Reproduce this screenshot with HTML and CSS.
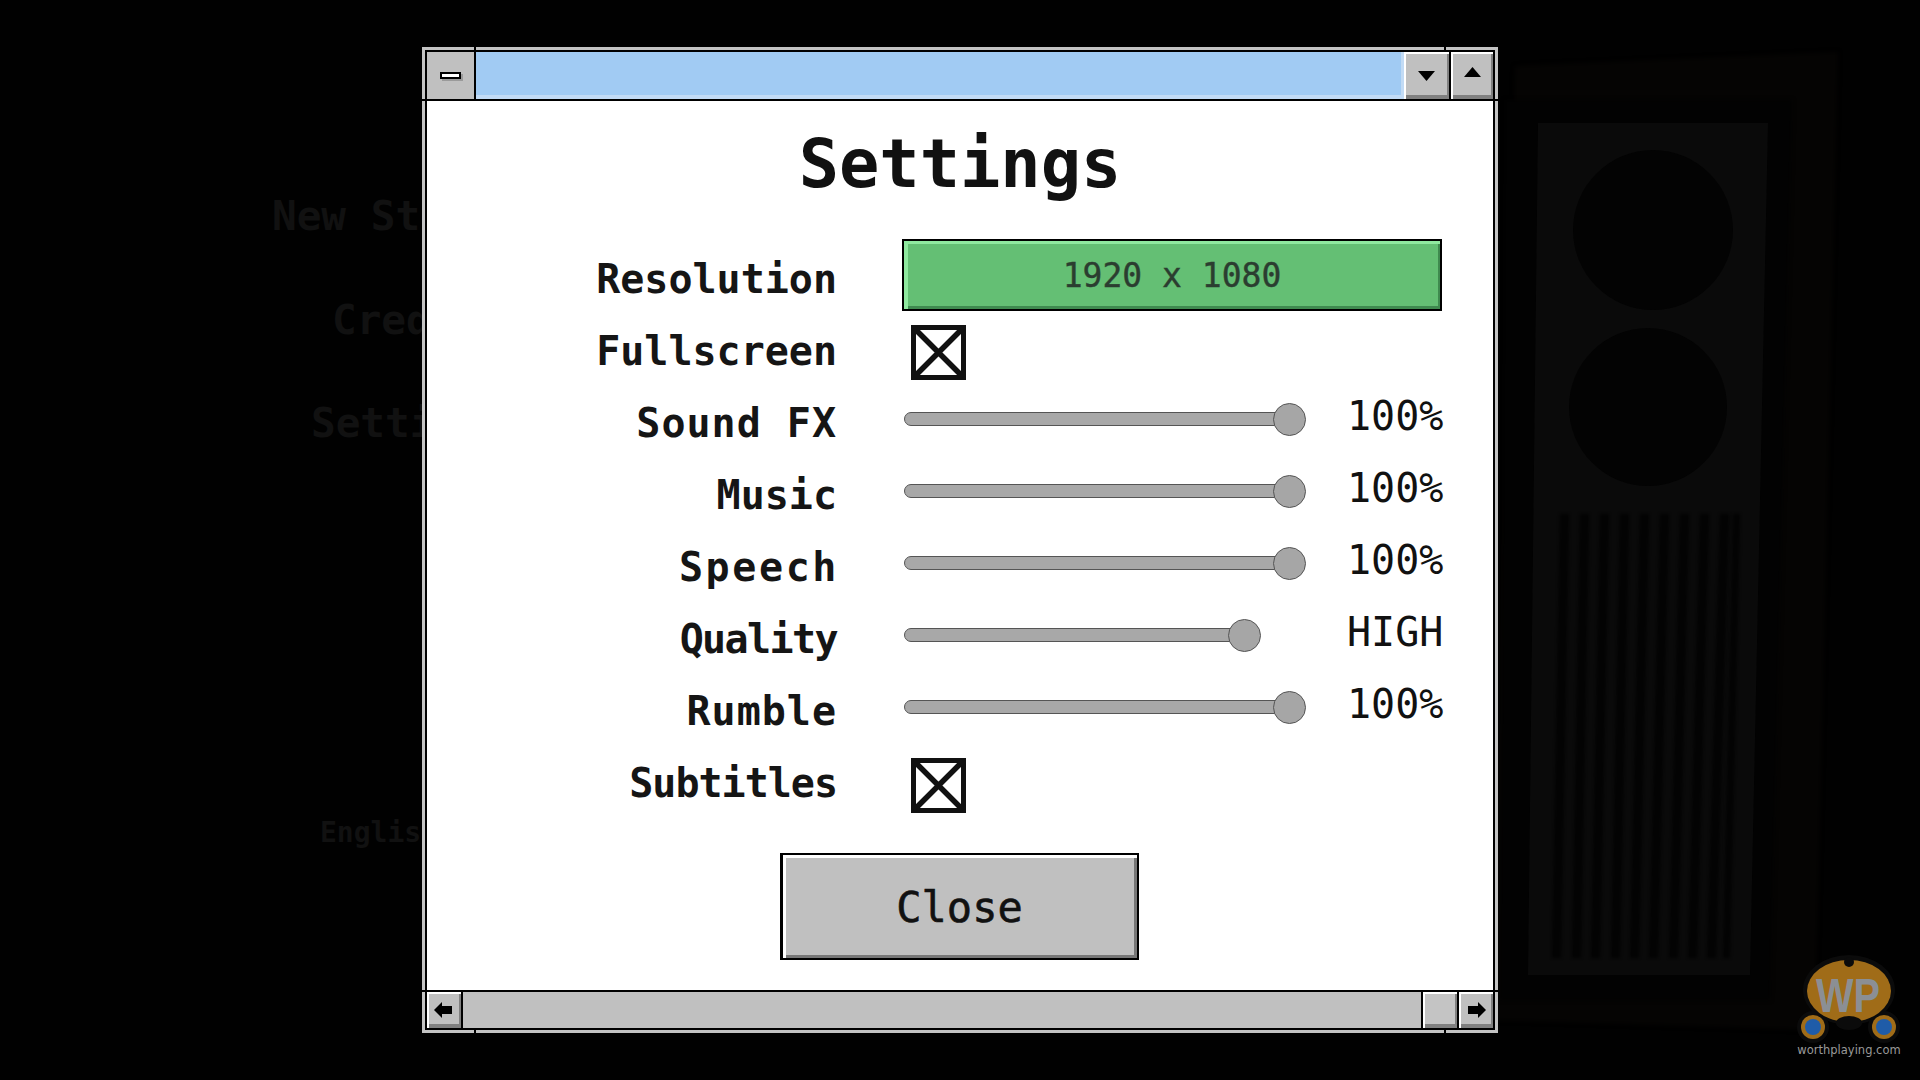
FILE: index.html
```html
<!DOCTYPE html>
<html lang="en">
<head>
    <meta charset="UTF-8">
    <meta name="viewport" content="width=device-width, initial-scale=1.0">
    <title>Settings</title>
    <link rel="stylesheet" href="styles.css">
</head>
<body>

    <!-- dimmed game scene behind the dialog -->
    <svg class="scene" viewBox="0 0 1920 1080" width="1920" height="1080">
        <polygon class="scene-frame" points="1515,66 1838,52 1815,1030 1490,1020"/>
        <polygon class="scene-shade" points="1505,100 1792,100 1770,1000 1500,1000"/>
        <polygon class="scene-panel" points="1538,123 1768,123 1750,975 1528,975"/>
        <circle class="scene-hole" cx="1653" cy="230" r="80"/>
        <circle class="scene-hole" cx="1648" cy="407" r="79"/>
        <g class="scene-slats">
            <polygon points="1560,514 1569,514 1561,958 1552,958"/>
            <polygon points="1580,514 1589,514 1581,958 1572,958"/>
            <polygon points="1600,514 1609,514 1600,958 1591,958"/>
            <polygon points="1620,514 1629,514 1620,958 1611,958"/>
            <polygon points="1640,514 1649,514 1639,958 1630,958"/>
            <polygon points="1660,514 1669,514 1658,958 1649,958"/>
            <polygon points="1680,514 1689,514 1678,958 1669,958"/>
            <polygon points="1700,514 1709,514 1697,958 1688,958"/>
            <polygon points="1720,514 1729,514 1716,958 1707,958"/>
            <polygon points="1733,514 1740,514 1730,958 1723,958"/>
        </g>
        <text class="scene-text" x="272" y="230">New Story</text>
        <text class="scene-text" x="332" y="334">Credits</text>
        <text class="scene-text" x="311" y="437">Settings</text>
        <text class="scene-text scene-text-small" x="320" y="842">English</text>

        <g class="logo-back">
            <ellipse cx="1849" cy="990" rx="46" ry="35"/>
            <circle cx="1813" cy="1027" r="16"/>
            <circle cx="1884" cy="1027" r="16"/>
        </g>
        <g class="logo-body">
            <ellipse cx="1849" cy="991" rx="42" ry="31"/>
            <circle cx="1813" cy="1027" r="12"/>
            <circle cx="1884" cy="1027" r="12"/>
        </g>
        <circle class="logo-notch" cx="1849" cy="962" r="5"/>
        <ellipse class="logo-notch" cx="1849" cy="1023" rx="13" ry="7"/>
        <circle class="logo-dot" cx="1813" cy="1027" r="8"/>
        <circle class="logo-dot" cx="1884" cy="1027" r="8"/>
        <text class="logo-mark" x="1848" y="1012" textLength="64" lengthAdjust="spacingAndGlyphs">WP</text>
        <text class="logo-url" x="1849" y="1054">worthplaying.com</text>
    </svg>

    <div class="window">
        <div class="frame">

            <div class="titlebar">
                <div class="menu-btn"><span class="menu-icon"></span></div>
                <div class="title-fill"></div>
                <div class="title-btn title-btn-line">
                    <svg width="17" height="10" viewBox="0 0 17 10"><polygon points="0,0 17,0 8.5,10"/></svg>
                </div>
                <div class="title-btn title-btn-up">
                    <svg width="17" height="10" viewBox="0 0 17 10"><polygon points="8.5,0 17,10 0,10"/></svg>
                </div>
            </div>

            <div class="content">
                <h1>Settings</h1>

                <div class="rows">
                    <div class="row">
                        <div class="label">Resolution</div>
                        <div class="select">1920 x 1080</div>
                    </div>
                    <div class="row">
                        <div class="label">Fullscreen</div>
                        <svg class="check" width="55" height="55" viewBox="0 0 55 55">
                            <rect x="2.5" y="2.5" width="50" height="50"/>
                            <path d="M3 3 L52 52 M52 3 L3 52"/>
                        </svg>
                    </div>
                    <div class="row">
                        <div class="label loose-1">Sound FX</div>
                        <div class="slider"><div class="track" style="width: 385px"></div><div class="thumb"></div></div>
                        <div class="value">100%</div>
                    </div>
                    <div class="row">
                        <div class="label">Music</div>
                        <div class="slider"><div class="track" style="width: 385px"></div><div class="thumb"></div></div>
                        <div class="value">100%</div>
                    </div>
                    <div class="row">
                        <div class="label loose-3">Speech</div>
                        <div class="slider"><div class="track" style="width: 385px"></div><div class="thumb"></div></div>
                        <div class="value">100%</div>
                    </div>
                    <div class="row">
                        <div class="label tight-2">Quality</div>
                        <div class="slider"><div class="track" style="width: 340px"></div><div class="thumb"></div></div>
                        <div class="value">HIGH</div>
                    </div>
                    <div class="row">
                        <div class="label loose-1">Rumble</div>
                        <div class="slider"><div class="track" style="width: 385px"></div><div class="thumb"></div></div>
                        <div class="value">100%</div>
                    </div>
                    <div class="row">
                        <div class="label tight-1">Subtitles</div>
                        <svg class="check check-low" width="55" height="55" viewBox="0 0 55 55">
                            <rect x="2.5" y="2.5" width="50" height="50"/>
                            <path d="M3 3 L52 52 M52 3 L3 52"/>
                        </svg>
                    </div>
                </div>

                <div class="close-btn">Close</div>
            </div>

            <div class="scrollbar">
                <div class="scroll-btn scroll-btn-left">
                    <svg width="18" height="16" viewBox="0 0 18 16"><polygon points="0,8 8,0 8,4 18,4 18,12 8,12 8,16"/></svg>
                </div>
                <div class="scroll-track"></div>
                <div class="scroll-thumb"></div>
                <div class="scroll-btn scroll-btn-right">
                    <svg width="18" height="16" viewBox="0 0 18 16"><polygon points="18,8 10,0 10,4 0,4 0,12 10,12 10,16"/></svg>
                </div>
            </div>

        </div>
    </div>

</body>
</html>
```

FILE: styles.css
```css
html, body {
    height: 100%;
}

body {
    margin: 0;
    background-color: #010101;
    font-family: "DejaVu Sans Mono", "Liberation Mono", monospace;
    color: #111;
    display: flex;
    align-items: center;
    justify-content: center;
    overflow: hidden;
}

/* background scene */
.scene {
    position: absolute;
    left: 0;
    top: 0;
}

.scene-frame {
    fill: #050403;
    filter: blur(2px);
}

.scene-shade {
    fill: #020202;
    filter: blur(2px);
}

.scene-panel {
    fill: #0a0a0a;
}

.scene-hole {
    fill: #030303;
}

.scene-slats polygon {
    fill: #030303;
    filter: blur(1.5px);
}

.scene-text {
    font-family: "DejaVu Sans Mono", monospace;
    font-weight: bold;
    font-size: 41px;
    fill: #111;
}

.scene-text-small {
    font-size: 28px;
}

.logo-back {
    fill: #0b0b0b;
}

.logo-body {
    fill: #a06c18;
}

.logo-notch {
    fill: #0b0b0b;
}

.logo-dot {
    fill: #1f5ca8;
}

.logo-mark {
    font-family: "Liberation Sans", sans-serif;
    font-weight: bold;
    font-size: 48px;
    text-anchor: middle;
    fill: #8b8f94;
}

.logo-url {
    font-family: "DejaVu Sans", sans-serif;
    font-size: 11.5px;
    text-anchor: middle;
    fill: #999;
}

/* window */
.window {
    position: relative;
    box-sizing: border-box;
    width: 1076px;
    height: 986px;
    padding: 3px;
    background-color: #c4c4c4;
    background-image:
        linear-gradient(#000, #000),
        linear-gradient(#000, #000),
        linear-gradient(#000, #000),
        linear-gradient(#000, #000),
        linear-gradient(#000, #000),
        linear-gradient(#000, #000),
        linear-gradient(#000, #000),
        linear-gradient(#000, #000);
    background-repeat: no-repeat;
    background-size: 2px 3px, 2px 3px, 2px 3px, 2px 3px, 3px 2px, 3px 2px, 3px 2px, 3px 2px;
    background-position:
        52px 0, 1022px 0, 52px 983px, 1022px 983px,
        0 52px, 1073px 52px, 0 943px, 1073px 943px;
}

.frame {
    box-sizing: border-box;
    height: 100%;
    border: 2px solid #000;
    display: flex;
    flex-direction: column;
    background-color: #fff;
}

.titlebar {
    display: flex;
    height: 49px;
    flex-shrink: 0;
    border-bottom: 2px solid #000;
    box-sizing: border-box;
}

.menu-btn {
    box-sizing: border-box;
    width: 49px;
    border-right: 2px solid #000;
    background-color: #c0c0c0;
    display: flex;
    align-items: center;
    justify-content: center;
}

.menu-icon {
    width: 17px;
    height: 3px;
    background-color: #fff;
    border: 2px solid #000;
    box-shadow: 2px 2px 0 #9a9a9a;
}

.title-fill {
    flex: 1;
    background-color: #a1cbf3;
    box-shadow: inset -3px -4px 0 #c2dbf5;
}

.title-btn {
    box-sizing: border-box;
    width: 42px;
    background-color: #c0c0c0;
    box-shadow: inset 2px 2px 0 #fff, inset -2px -4px 0 #808080;
    display: flex;
    align-items: center;
    justify-content: center;
}

.title-btn-line {
    width: 47px;
    border-right: 2px solid #000;
}

.title-btn-up svg {
    margin-bottom: 7px;
}

.title-btn svg {
    fill: #000;
}

/* settings form */
.content {
    flex: 1;
    display: flex;
    flex-direction: column;
    align-items: center;
}

h1 {
    margin: 18px 0 34px;
    font-size: 67px;
    line-height: 90px;
    font-weight: bold;
    color: #111;
}

.rows {
    width: 100%;
    display: flex;
    flex-direction: column;
}

.row {
    display: flex;
    align-items: center;
    height: 72px;
}

.label {
    width: 410px;
    margin-right: 65px;
    text-align: right;
    font-size: 40px;
    font-weight: bold;
    color: #151515;
}

.loose-1 {
    letter-spacing: 1px;
}

.loose-3 {
    width: 412px;
    margin-right: 63px;
    letter-spacing: 2.6px;
}

.tight-1 {
    letter-spacing: -1px;
}

.tight-2 {
    letter-spacing: -1.6px;
}

.select {
    box-sizing: border-box;
    width: 540px;
    height: 72px;
    margin-bottom: 8px;
    border: 2px solid #000;
    background-color: #64bf74;
    box-shadow: inset 4px 3px 0 #8fe99f, inset -2px -3px 0 #3f8a4f;
    color: #2b3d30;
    font-size: 33px;
    -webkit-text-stroke: 0.4px #2b3d30;
    text-align: center;
    line-height: 70px;
}

.check {
    margin: 2px 0 0 9px;
    fill: #fff;
    stroke: #111;
}

.check rect {
    stroke-width: 5;
}

.check path {
    stroke-width: 5.5;
}

.check-low {
    margin-top: 4px;
}

.slider {
    width: 403px;
    margin: 0 40px 8px 2px;
    display: flex;
    align-items: center;
}

.track {
    box-sizing: border-box;
    height: 14px;
    background-color: #a8a8a8;
    border: 1px solid #555;
    border-radius: 7px 0 0 7px;
}

.thumb {
    box-sizing: border-box;
    flex-shrink: 0;
    width: 33px;
    height: 33px;
    margin-left: -16px;
    background-color: #a6a6a6;
    border: 1px solid #555;
    border-radius: 50%;
}

.value {
    font-size: 40px;
    margin-bottom: 14px;
    color: #111;
}

.close-btn {
    box-sizing: border-box;
    width: 359px;
    height: 107px;
    margin: 34px 2px 0 0;
    border: 2px solid #000;
    border-left-width: 3px;
    background-color: #c0c0c0;
    box-shadow: inset 3px 3px 0 #fff, inset -3px -3px 0 #777;
    font-size: 42px;
    -webkit-text-stroke: 0.6px #111;
    text-align: center;
    line-height: 106px;
}

/* bottom scrollbar */
.scrollbar {
    box-sizing: border-box;
    display: flex;
    height: 38px;
    flex-shrink: 0;
    border-top: 2px solid #000;
    background-color: #c0c0c0;
}

.scroll-btn {
    box-sizing: border-box;
    width: 36px;
    background-color: #c0c0c0;
    box-shadow: inset 2px 2px 0 #fff, inset -2px -4px 0 #808080;
    display: flex;
    align-items: center;
    justify-content: center;
}

.scroll-btn-left {
    border-right: 2px solid #000;
    padding-right: 2px;
}

.scroll-btn-right {
    border-left: 2px solid #000;
    padding-left: 2px;
}

.scroll-track {
    flex: 1;
}

.scroll-thumb {
    box-sizing: border-box;
    width: 36px;
    border-left: 2px solid #000;
    background-color: #c4c4c4;
    box-shadow: inset 2px 2px 0 #fff, inset -2px -4px 0 #808080;
}
```
